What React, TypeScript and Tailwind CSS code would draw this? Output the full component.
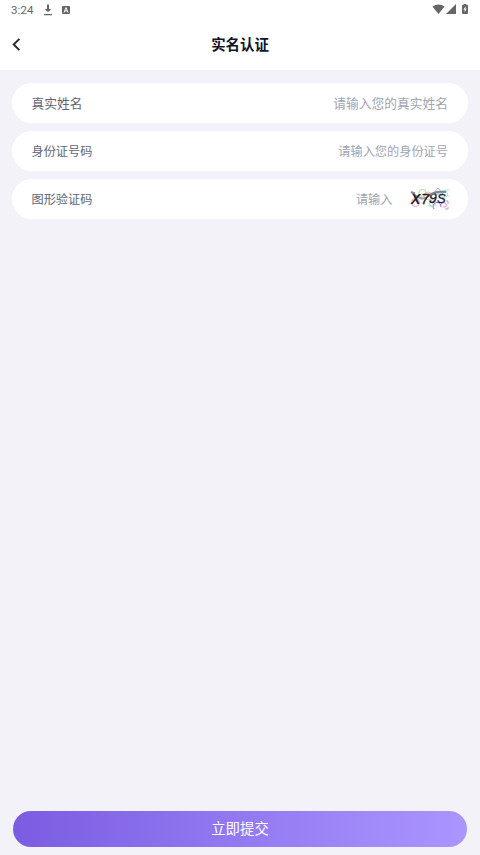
import React from 'react';

interface FieldRowProps {
  label: string;
  placeholder: string;
  textClass: string;
  children?: React.ReactNode;
}

const StatusBar: React.FC = () => (
  <div className="flex h-5 items-center justify-between pl-[11px] pr-[12px] text-[#666666]">
    <div className="flex items-center">
      <span className="w-[32px] font-[Roboto] text-[11.5px] leading-5 tracking-[0.1px]">3:24</span>
      <svg className="h-3 w-[10px]" viewBox="0 0 10 12" fill="currentColor">
        <path d="M4 0.5h2v4.5h2.2L5 8.3 1.8 5H4zM1 10h8v1.3H1z" />
      </svg>
      <svg className="ml-[9px] h-[8px] w-[8px]" viewBox="0 0 8 8">
        <rect width="8" height="8" rx="1" fill="currentColor" />
        <path d="M2 6.5l2-5 2 5M2.8 4.9h2.4" fill="none" stroke="#fff" strokeWidth="1" />
      </svg>
    </div>
    <div className="flex items-center pb-[2px]">
      <svg className="h-[10px] w-[13px]" viewBox="0 0 13 10" fill="currentColor">
        <path d="M0.4 2.6C4-0.3 9-0.3 12.6 2.6L6.5 10z" />
      </svg>
      <svg className="ml-[1px] h-[10px] w-[10px]" viewBox="0 0 10 10" fill="currentColor">
        <path d="M10 0v10H0z" />
      </svg>
      <svg className="ml-[6px] h-[10px] w-[6px]" viewBox="0 0 6 10">
        <path d="M1.7 0h2.6v0.8H5q1 0 1 1V9q0 1-1 1H1q-1 0-1-1V1.8q0-1 1-1h.7z" fill="currentColor" />
        <path d="M3.6 2.2L1.4 5.7h1.3v2.5l2-3.4H3.6z" fill="#fff" />
      </svg>
    </div>
  </div>
);

const Header: React.FC = () => (
  <header className="grid h-12 grid-cols-[60px_1fr_60px] items-center">
    <button className="pl-[12px]" aria-label="返回">
      <svg className="h-[14px] w-[9px]" viewBox="0 0 9 14" fill="none">
        <path d="M7.4 1.9L1.7 7.5l5.7 5.6" stroke="#292929" strokeWidth="1.9" />
      </svg>
    </button>
    <h1 className="text-center text-[14.4px] font-bold text-[#10142a]">实名认证</h1>
  </header>
);

const FieldRow: React.FC<FieldRowProps> = ({ label, placeholder, textClass, children }) => (
  <div className={`flex h-10 items-center justify-between rounded-full bg-white pl-[19.5px] ${textClass}`}>
    <span className="text-[#616575]">{label}</span>
    <div className="flex items-center">
      <span className="text-[#a1a4b3]">{placeholder}</span>
      {children}
    </div>
  </div>
);

const Captcha: React.FC = () => (
  <svg className="ml-[17px] h-[24px] w-[40px]" viewBox="0 0 40 24" fill="none">
    <g strokeWidth="0.8">
      <circle cx="5.5" cy="15.5" r="4" stroke="#f07fae" />
      <circle cx="12.5" cy="6" r="3.6" stroke="#93d880" />
      <circle cx="18" cy="9" r="4" stroke="#eda886" />
      <path d="M23 7l5-6 5 6z" stroke="#9c86cc" />
      <circle cx="34" cy="7" r="3.5" stroke="#8edfcd" />
      <path d="M24 22a4 4 0 1 1 7-2" stroke="#9659e8" strokeWidth="1" />
      <circle cx="22.5" cy="16" r="3.2" stroke="#97df9f" />
      <path d="M31 17q3-3 5 0t-3 3M36 14h2v3M35 22h3v-2" stroke="#d870d4" />
    </g>
    <path d="M2 6c5 3 8 7 13 5s7-5 10-4" stroke="#91a3ac" strokeWidth="1.8" />
    <g fill="#20202b" fontFamily="Liberation Sans, sans-serif" fontSize="15" fontStyle="italic">
      <text x="1" y="17" fontSize="14" fontWeight="bold">X</text>
      <text x="11" y="17" stroke="#20202b" strokeWidth="0.3">7</text>
      <text x="19" y="16" fontSize="14" stroke="#20202b" strokeWidth="0.3">9</text>
      <text x="27" y="16" fontSize="13" stroke="#20202b" strokeWidth="0.3">S</text>
    </g>
    <path d="M1 5l4 1.5M20 8c3-3 8-4 16-3" stroke="#7b8796" strokeWidth="2" />
    <path d="M35 3h4M37 9h2M18 18l4 2" stroke="#6edfd6" strokeWidth="0.7" />
  </svg>
);

export default function App() {
  return (
    <div className="flex h-[855px] w-[480px] flex-col bg-[#f3f2f8] font-['Noto_Sans_CJK_SC',sans-serif]">
      <div className="h-[70px] bg-white">
        <StatusBar />
        <Header />
      </div>
      <main className="flex flex-1 flex-col gap-2 px-3 pt-[13px]">
        <FieldRow label="真实姓名" placeholder="请输入您的真实姓名" textClass="pr-5 text-[12.75px]" />
        <FieldRow label="身份证号码" placeholder="请输入您的身份证号" textClass="pr-5 text-[12.2px]" />
        <FieldRow label="图形验证码" placeholder="请输入" textClass="pr-[18.5px] text-[12.2px]">
          <Captcha />
        </FieldRow>
      </main>
      <footer className="px-[13px] pb-2">
        <button className="block h-9 w-full rounded-full bg-linear-to-r from-[#7b5ce2] to-[#ab95ff] pb-[2px] text-[14.4px] text-white">
          立即提交
        </button>
      </footer>
    </div>
  );
}
